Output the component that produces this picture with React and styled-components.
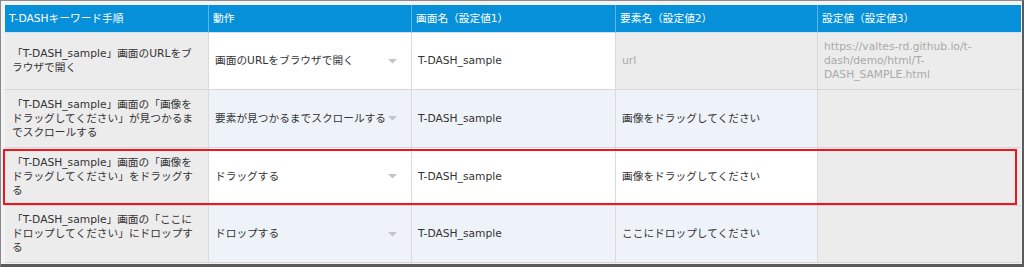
import React from "react";
import styled, { createGlobalStyle } from "styled-components";

const Global = createGlobalStyle`
  html, body { margin: 0; padding: 0; background: #f3f3f3; }
  body { font-family: "DejaVu Sans", "Noto Sans CJK JP", sans-serif; }
`;

const Frame = styled.div`
  box-sizing: border-box;
  width: 1024px;
  height: 267px;
  border-top: 1px solid #8a8a8a;
  border-left: 1px solid #8a8a8a;
  border-right: 2px solid #5a5a5a;
  border-bottom: 3px solid #5a5a5a;
  background: #f3f3f3;
  padding: 4px 1px 1px 4px;
  overflow: hidden;
`;

const Table = styled.div`
  width: 1016px;
  display: flex;
  flex-direction: column;
  font-size: 10.7px;
  line-height: 14px;
  color: #333;
`;

const Row = styled.div`
  position: relative;
  display: grid;
  grid-template-columns: 204px 203px 204px 202px 203px;
  height: ${(p) => p.$h}px;
  ${(p) =>
    p.$highlight &&
    `
    &::after {
      content: "";
      position: absolute;
      left: -2px;
      right: 4px;
      top: 1px;
      bottom: 1px;
      border: 2px solid #f0141e;
      pointer-events: none;
    }
  `}
`;

const HeadCell = styled.div`
  box-sizing: border-box;
  display: flex;
  align-items: center;
  padding-left: 4px;
  background: #0790da;
  color: #fff;
  border-right: 1px solid #5db4e6;
  border-bottom: 1px solid #cfe2ee;
  white-space: nowrap;
  &:last-child { border-right: none; }
`;

const Cell = styled.div`
  box-sizing: border-box;
  display: flex;
  align-items: center;
  justify-content: space-between;
  padding: 0 ${(p) => p.$pr ?? 6}px 0 ${(p) => p.$pl ?? 6}px;
  background: ${(p) => p.$bg};
  color: ${(p) => (p.$muted ? "#a9a9a9" : "#333")};
  border-right: 1px solid #dadada;
  border-bottom: 1px solid #d6d6d6;
  &:last-child { border-right: none; }
`;

const Text = styled.span`
  display: block;
  word-break: normal;
`;

const Arrow = styled.svg`
  flex: none;
  width: 9px;
  height: 5px;
`;

const GRAY = "#ececec";
const WHITE = "#ffffff";
const BLUE = "#eef3f9";

const headers = [
  "T-DASHキーワード手順",
  "動作",
  "画面名（設定値1）",
  "要素名（設定値2）",
  "設定値（設定値3）",
];

const rows = [
  {
    h: 57,
    step: "「T-DASH_sample」画面のURLをブラウザで開く",
    action: "画面のURLをブラウザで開く",
    screen: "T-DASH_sample",
    element: "url",
    elementMuted: true,
    value: "https://valtes-rd.github.io/t-dash/demo/html/T-DASH_SAMPLE.html",
    bg: WHITE,
    elementBg: GRAY,
  },
  {
    h: 58,
    step: "「T-DASH_sample」画面の「画像をドラッグしてください」が見つかるまでスクロールする",
    action: "要素が見つかるまでスクロールする",
    screen: "T-DASH_sample",
    element: "画像をドラッグしてください",
    value: "",
    bg: BLUE,
    elementBg: BLUE,
  },
  {
    h: 58,
    step: "「T-DASH_sample」画面の「画像をドラッグしてください」をドラッグする",
    action: "ドラッグする",
    screen: "T-DASH_sample",
    element: "画像をドラッグしてください",
    value: "",
    bg: WHITE,
    elementBg: WHITE,
    highlight: true,
  },
  {
    h: 57,
    step: "「T-DASH_sample」画面の「ここにドロップしてください」にドロップする",
    action: "ドロップする",
    screen: "T-DASH_sample",
    element: "ここにドロップしてください",
    value: "",
    bg: BLUE,
    elementBg: BLUE,
  },
];

function DropArrow() {
  return (
    <Arrow viewBox="0 0 9 5">
      <polygon points="0,0 9,0 4.5,4.5" fill="#c4c4c4" />
    </Arrow>
  );
}

export default function App() {
  return (
    <>
      <Global />
      <Frame>
        <Table>
          <Row $h={28}>
            {headers.map((h) => (
              <HeadCell key={h}>{h}</HeadCell>
            ))}
          </Row>
          {rows.map((r, i) => (
            <Row key={i} $h={r.h} $highlight={r.highlight}>
              <Cell $bg={GRAY} $pl={7} $pr={11}>
                <Text>{r.step}</Text>
              </Cell>
              <Cell $bg={r.bg} $pr={14}>
                <Text>{r.action}</Text>
                <DropArrow />
              </Cell>
              <Cell $bg={r.bg}>
                <Text>{r.screen}</Text>
              </Cell>
              <Cell $bg={r.elementBg} $muted={r.elementMuted}>
                <Text>{r.element}</Text>
              </Cell>
              <Cell $bg={GRAY} $muted>
                <Text>{r.value}</Text>
              </Cell>
            </Row>
          ))}
        </Table>
      </Frame>
    </>
  );
}
